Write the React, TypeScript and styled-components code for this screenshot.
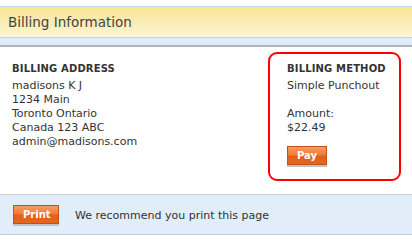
import styled, { createGlobalStyle, css } from 'styled-components'

const GlobalStyle = createGlobalStyle`
    html, body {
        margin: 0;
        padding: 0;
        background: #fff;
    }

    body {
        font-family: 'DejaVu Sans', Verdana, sans-serif;
        color: #333;
    }
`

type Address = {
    name: string
    street: string
    city: string
    country: string
    email: string
}

const ADDRESS: Address = {
    name: 'madisons K J',
    street: '1234 Main',
    city: 'Toronto Ontario',
    country: 'Canada 123 ABC',
    email: 'admin@madisons.com',
}

const App = () => {
    return (
        <Page>
            <GlobalStyle />
            <Header>
                <HeaderTitle>Billing Information</HeaderTitle>
                <HeaderStrip />
            </Header>

            <Content>
                <Section>
                    <SectionTitle>Billing Address</SectionTitle>
                    <Line>{ADDRESS.name}</Line>
                    <Line>{ADDRESS.street}</Line>
                    <Line>{ADDRESS.city}</Line>
                    <Line>{ADDRESS.country}</Line>
                    <Line>{ADDRESS.email}</Line>
                </Section>

                <MethodBox>
                    <SectionTitle>Billing Method</SectionTitle>
                    <Line>Simple Punchout</Line>
                    <Line gap>Amount:</Line>
                    <Line>$22.49</Line>
                    <OrangeButton spacing={11}>Pay</OrangeButton>
                </MethodBox>
            </Content>

            <Footer>
                <OrangeButton>Print</OrangeButton>
                <FooterNote>We recommend you print this page</FooterNote>
            </Footer>
        </Page>
    )
}

const Page = styled.div(
    () => css`
        width: 412px;
        padding-top: 6px;
    `
)

const Header = styled.div(
    () => css`
        border-top: 1px solid #c8d3df;
        border-bottom: 2px solid #aeb4bb;
    `
)

const HeaderTitle = styled.h1(
    () => css`
        margin: 0;
        height: 30px;
        padding-left: 8px;
        font-size: 13.5px;
        font-weight: normal;
        line-height: 30px;
        color: #444;
        background: linear-gradient(to bottom, #f8e493 0%, #faeeb9 60%, #fcf5d6 100%);
        border-bottom: 1px solid #c8d3df;
    `
)

const HeaderStrip = styled.div(
    () => css`
        height: 7px;
        background: #e0ecf9;
    `
)

const Content = styled.div(
    () => css`
        display: flex;
        justify-content: space-between;
        align-items: flex-start;
        height: 147px;
        padding: 5px 11px 0 12px;
        box-sizing: border-box;
    `
)

const Section = styled.div(
    () => css`
        display: flex;
        flex-direction: column;
        align-items: flex-start;
        padding-top: 10px;
    `
)

const MethodBox = styled.div(
    () => css`
        display: flex;
        flex-direction: column;
        align-items: flex-start;
        width: 133px;
        box-sizing: border-box;
        padding: 8px 0 14px 17px;
        border: 2px solid #ff0000;
        border-radius: 9px;
    `
)

const SectionTitle = styled.h2(
    () => css`
        margin: 0 0 3px;
        font-size: 10px;
        font-weight: bold;
        line-height: 14px;
        letter-spacing: 0.15px;
        text-transform: uppercase;
        color: #333;
    `
)

const Line = styled.div<{ gap?: boolean }>(
    ({ gap }) => css`
        font-size: 11px;
        line-height: 14px;
        color: #333;

        ${gap &&
        css`
            margin-top: 14px;
        `}
    `
)

const OrangeButton = styled.button<{ spacing?: number }>(
    ({ spacing = 0 }) => css`
        margin-top: ${spacing}px;
        height: 19px;
        padding: 0 9px;
        min-width: 40px;
        box-sizing: border-box;
        border: 1px solid #c6501a;
        border-radius: 0;
        font-family: 'DejaVu Sans', Verdana, sans-serif;
        font-size: 10px;
        font-weight: bold;
        line-height: 17px;
        color: #fff;
        background: linear-gradient(to bottom, #f79a64 0%, #f07a36 48%, #e45f17 52%, #e3661f 100%);
        box-shadow: 0 2px 0 #bcc3cc;
        cursor: pointer;
    `
)

const Footer = styled.div(
    () => css`
        display: flex;
        align-items: center;
        gap: 16px;
        height: 39px;
        padding-left: 13px;
        background: #e1edf9;
        border-top: 1px solid #c6d0db;
        border-bottom: 1px solid #c6d0db;

        & ${OrangeButton} {
            width: 46px;
        }
    `
)

const FooterNote = styled.div(
    () => css`
        padding-top: 3px;
        font-size: 11px;
        line-height: 14px;
        color: #333;
    `
)

export default App
